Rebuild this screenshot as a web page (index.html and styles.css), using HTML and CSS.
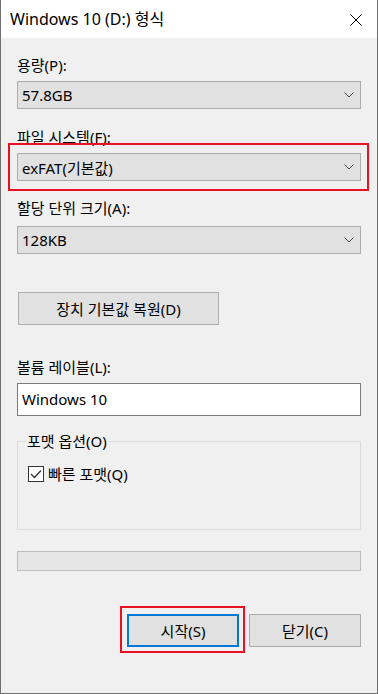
FILE: index.html
```html
<!DOCTYPE html>
<html lang="ko">
<head>
  <meta charset="UTF-8">
  <meta name="viewport" content="width=device-width, initial-scale=1.0">
  <title>Windows 10 (D:) 형식</title>
  <link rel="stylesheet" href="styles.css">
</head>
<body>
  <div class="window">
    <div class="titlebar">
      <span class="title">Windows 10 (D:) 형식</span>
      <span class="close-x">
        <svg width="12" height="12" viewBox="0 0 12 12"><path d="M0.5 0.5 L11.5 11.5 M11.5 0.5 L0.5 11.5" stroke="#000" stroke-width="1" fill="none"/></svg>
      </span>
    </div>

    <div class="content">
      <div class="label first">용량(P):</div>
      <div class="combo">
        <span>57.8GB</span>
        <svg class="chev" width="10" height="6" viewBox="0 0 10 6"><path d="M0.5 0.5 L5 5 L9.5 0.5" stroke="#444" stroke-width="1" fill="none"/></svg>
      </div>

      <div class="label">파일 시스템(F):</div>
      <div class="combo marked">
        <span>exFAT(기본값)</span>
        <svg class="chev" width="10" height="6" viewBox="0 0 10 6"><path d="M0.5 0.5 L5 5 L9.5 0.5" stroke="#444" stroke-width="1" fill="none"/></svg>
      </div>

      <div class="label third">할당 단위 크기(A):</div>
      <div class="combo">
        <span>128KB</span>
        <svg class="chev" width="10" height="6" viewBox="0 0 10 6"><path d="M0.5 0.5 L5 5 L9.5 0.5" stroke="#444" stroke-width="1" fill="none"/></svg>
      </div>

      <button class="btn restore">장치 기본값 복원(D)</button>

      <div class="label vol">볼륨 레이블(L):</div>
      <div class="textbox">Windows 10</div>

      <fieldset class="group">
        <legend>포맷 옵션(O)</legend>
        <label class="check">
          <span class="box">
            <svg width="12" height="10" viewBox="0 0 12 10"><path d="M1 5 L4.5 8.5 L11 1.5" stroke="#333" stroke-width="1.3" fill="none"/></svg>
          </span>
          빠른 포맷(Q)
        </label>
      </fieldset>

      <div class="progress"></div>

      <div class="actions">
        <button class="btn primary marked-btn">시작(S)</button>
        <button class="btn">닫기(C)</button>
      </div>
    </div>
  </div>
</body>
</html>
```

FILE: styles.css
```css
body {
  margin: 0;
  font-family: "Noto Sans", "Noto Sans CJK KR", sans-serif;
  font-size: 15px;
  color: #000;
}
.window {
  width: 378px;
  height: 694px;
  box-sizing: border-box;
  border: 1px solid #707070;
  border-top: none;
  background-color: #f0f0f0;
}
.titlebar {
  height: 38px;
  background-color: #fff;
  display: flex;
  align-items: center;
  justify-content: space-between;
  padding: 0 15px 0 9px;
}
.title {
  font-size: 16px;
  line-height: 20px;
}
.close-x {
  display: flex;
  margin-top: 1px;
}
.content {
  padding: 0 16px;
}
.label {
  line-height: 20px;
  margin-top: 18px;
  margin-bottom: 6px;
}
.label.first {
  margin-top: 17px;
}
.label.third {
  margin-top: 17px;
  margin-bottom: 8px;
}
.combo {
  position: relative;
  height: 28px;
  box-sizing: border-box;
  border: 1px solid #adadad;
  background-color: #e1e1e1;
  display: flex;
  align-items: center;
  justify-content: space-between;
  padding: 0 6px 0 4px;
}
.marked::after {
  content: "";
  position: absolute;
  top: -11px;
  left: -10px;
  right: -9px;
  bottom: -11px;
  border: 2px solid #e81123;
}
.btn {
  font-family: inherit;
  font-size: 15px;
  color: #000;
  height: 33px;
  box-sizing: border-box;
  border: 1px solid #adadad;
  background-color: #e1e1e1;
  padding: 0;
}
.restore {
  display: block;
  width: 201px;
  margin: 38px 0 0 1px;
}
.label.vol {
  margin-top: 32px;
}
.textbox {
  height: 33px;
  box-sizing: border-box;
  border: 1px solid #7a7a7a;
  background-color: #fff;
  padding: 0 4px;
  line-height: 31px;
}
.group {
  margin: 15px 0 0;
  border: 1px solid #dcdcdc;
  padding: 13px 8px 45px;
}
.group legend {
  padding: 0 1px;
  line-height: 20px;
}
.check {
  display: flex;
  align-items: center;
  gap: 4px;
  line-height: 20px;
  margin-left: 2px;
}
.box {
  width: 16px;
  height: 16px;
  box-sizing: border-box;
  border: 1px solid #333;
  background-color: #fff;
  display: flex;
  align-items: center;
  justify-content: center;
}
.progress {
  margin-top: 21px;
  height: 20px;
  box-sizing: border-box;
  border: 1px solid #bcbcbc;
  background-color: #e6e6e6;
}
.actions {
  display: flex;
  justify-content: flex-end;
  gap: 10px;
  margin-top: 43px;
}
.actions .btn {
  width: 112px;
  height: 33px;
}
.primary {
  position: relative;
  border: 2px solid #0078d7;
}
.marked-btn::after {
  content: "";
  position: absolute;
  top: -10px;
  left: -9px;
  right: -8px;
  bottom: -8px;
  border: 2px solid #e81123;
}
```
